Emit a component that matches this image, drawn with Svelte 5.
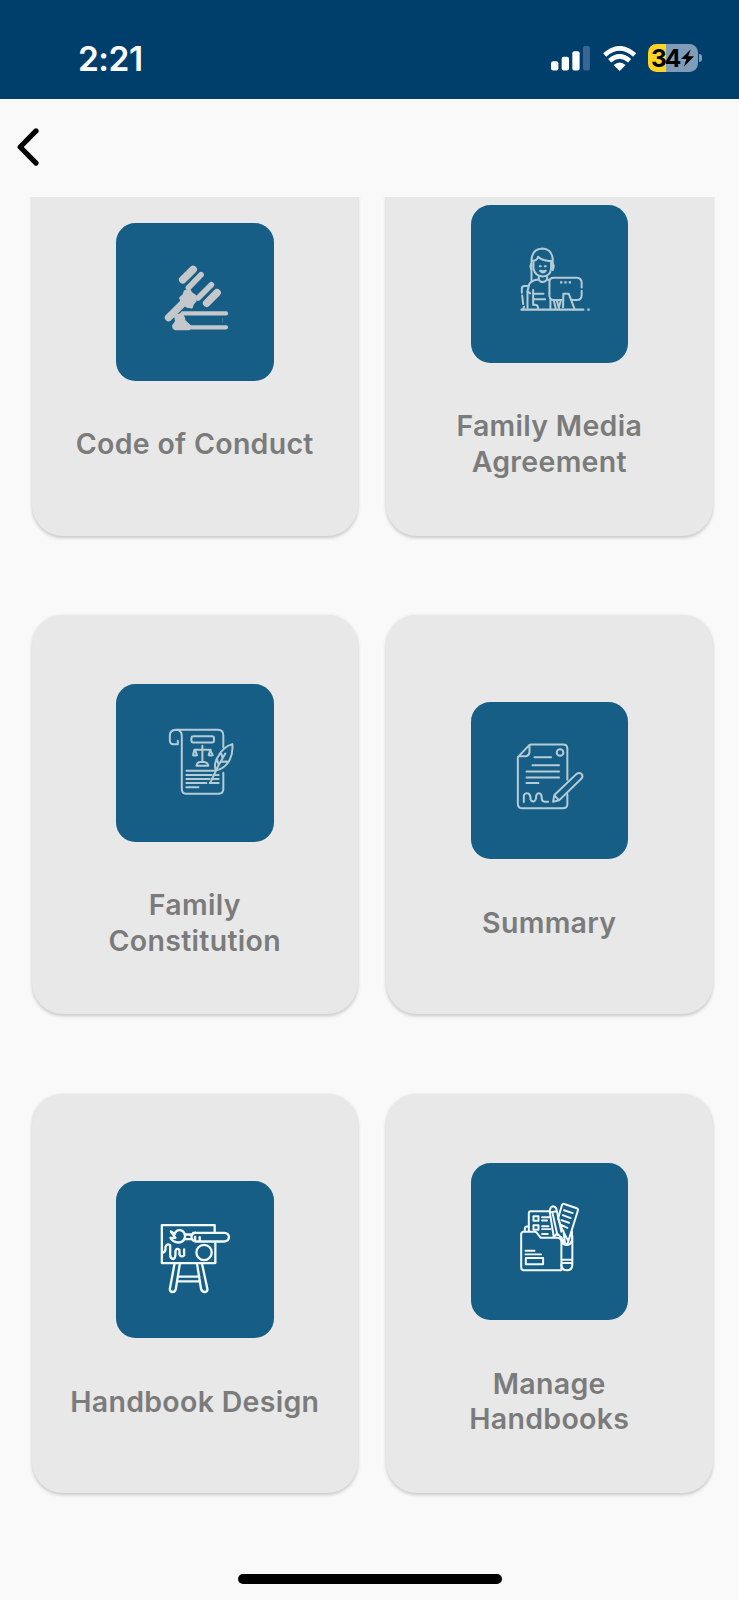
<script lang="ts">
  type IconName = "gavel" | "media" | "scroll" | "summary" | "easel" | "folder";

  interface Card {
    title: string;
    icon: IconName;
    viewBox: string;
  }

  const cards: Card[] = [
    { title: "Code of Conduct", icon: "gavel", viewBox: "-102 -80 474 474" },
    { title: "Family Media Agreement", icon: "media", viewBox: "-102 -88 474 474" },
    { title: "Family Constitution", icon: "scroll", viewBox: "-117 -90 474 474" },
    { title: "Summary", icon: "summary", viewBox: "-102 -83 474 474" },
    { title: "Handbook Design", icon: "easel", viewBox: "-102 -86 474 474" },
    { title: "Manage Handbooks", icon: "folder", viewBox: "-102 -80 474 474" },
  ];
</script>

<div class="screen">
  <header class="status">
    <span class="time">2:21</span>
    <div class="indicators">
      <svg class="signal" viewBox="0 0 117 74">
        <rect x="0" y="46" width="22" height="28" rx="6" fill="#fff" />
        <rect x="32" y="32" width="22" height="42" rx="6" fill="#fff" />
        <rect x="64" y="16" width="22" height="58" rx="6" fill="#fff" />
        <rect x="96" y="0" width="21" height="74" rx="6" fill="#3a6492" />
      </svg>
      <svg class="wifi" viewBox="0 0 100 75" fill="none" stroke="#fff" stroke-width="14">
        <path d="M5 27 Q50 -13 95 27" />
        <path d="M20 44 Q50 18 80 44" />
        <path d="M32 57 Q50 42 68 57 L50 75 Z" fill="#fff" stroke="none" />
      </svg>
      <div class="battery">
        <div class="cell">
          <span>34</span>
          <svg class="bolt" viewBox="0 0 36 48"><path d="M27 0 L0 27 H15 L8 48 L36 19 H20 Z" /></svg>
        </div>
        <i class="nub"></i>
      </div>
    </div>
  </header>

  <nav class="toolbar">
    <button type="button" class="back" aria-label="Back">
      <svg viewBox="0 0 22 38"><path d="M19 2.9 L3.2 19 L19 35.1" /></svg>
    </button>
  </nav>

  <main class="scroll">
    <div class="grid">
      {#each cards as card (card.title)}
        <button type="button" class="card">
          <span class="tile {card.icon}">
            <svg viewBox={card.viewBox}>
              {#if card.icon === "gavel"}
                <path stroke-width="23" d="M99 91 L130 60 M171 161 L202 130" />
                <path stroke-width="17" d="M116 115 L154 76 M145 146 L185 106" />
                <path stroke-width="22" d="M56 205 L112 149" />
                <path class="solid" d="M91 146 L101 137 L105 125 L119 121 L126 132 L138 140 L137 155 L130 163 L126 174 L112 172 L99 164 Z" />
                <path stroke-width="13" d="M98 192 H229 M82 234 H229" />
                <path class="solid" d="M76 202 Q86 192 96 195 Q102 200 104 214 L121 230 L118 240 H77 Q69 238 70 229 L79 216 Z" />
                <path stroke-width="2" opacity="0.4" d="M219 207 V218" />
              {:else if card.icon === "media"}
                <path d="M80 140 V78 Q82 44 113 43 Q141 45 144 74 V108" />
                <path d="M84 80 Q97 80 100 68 Q115 82 139 80 V104 Q136 126 114 127 Q91 126 86 104 V82" />
                <path d="M80 88 Q74 96 80 105 M144 88 Q150 96 144 105" />
                <path d="M106 110 Q115 120 123 110 Q115 113 106 110" />
                <path d="M105 96 h3 M120 96 h3" />
                <path d="M102 126 V137 Q113 151 127 137 V127 M102 136 Q78 138 73 151 L68 172 L76 178 M127 136 L134 138" />
                <path d="M68 156 H58 Q51 157 51 163 V176 M52 184 L55 210 M58 218 L55 224 M68 172 V223 M85 168 V210 M88 179 H116 M88 196 H121 M85 213 Q99 209 100 223" />
                <path d="M134 178 V144 Q134 131 147 131 H216 Q231 132 231 146 V160 M231 170 V184 Q230 198 217 198 H202" />
                <path d="M134 178 Q132 196 145 198 H171 M137 198 V223 M147 199 L153 223 M156 199 L163 223 M168 199 L164 216" />
                <path d="M175 220 L176 179 H192 L209 223" />
                <path class="dots" d="M166 145 h7 M179 145 h7 M192 145 h7 M248 227 h7" />
                <path d="M50 227 H236" stroke-width="7" />
              {:else if card.icon === "scroll"}
                <path d="M65 48 H190 Q206 48 206 65 V101 M206 177 V226 Q206 240 192 240 H94 Q81 240 81 226 V66 Q80 48 63 48 Q45 49 45 66 V79 Q45 91 56 91 H69 V81" />
                <rect x="110" y="67" width="68" height="19" rx="6" />
                <path d="M143 96 V143 M119 108 H168 M119 108 L115 124 Q120 127 127 124 L121 109 M167 108 L162 124 Q168 127 174 124 L167 109" />
                <path d="M125 156 Q127 145 137 145 H149 Q159 146 161 156 Z" />
                <path d="M95 171 H179 M95 184 H171 M95 196 H165 M95 208 H155 M95 221 H131 M177 184 H192 M172 196 H192 M165 208 H192" />
                <path d="M167 207 L184 171 M183 170 Q176 145 193 124 Q207 99 233 91 Q236 116 225 139 Q211 165 183 170 L212 119 M192 153 L187 137 M197 144 L217 143 M203 130 L200 120" />
              {:else if card.icon === "summary"}
                <path d="M78 45 H175 Q188 45 188 58 V151 M188 194 V224 Q188 237 174 237 H53 Q39 237 39 223 V83 L74 46 V68 Q73 79 63 80 H42" />
                <circle cx="166" cy="69" r="10" />
                <path d="M89 83 H139 M83 107 H163 M65 126 H163 M65 144 H163 M65 161 H101" />
                <path d="M57 218 V198 Q60 190 70 192 Q77 196 77 205 V210 Q80 218 88 216 Q94 213 94 204 V200 Q96 190 105 192 Q111 195 111 207 Q111 217 120 217 H130" />
                <path d="M145 217 L149 197 L215 134 Q224 127 231 134 Q237 142 229 149 L163 213 Z M149 198 L162 212" />
              {:else if card.icon === "easel"}
                <path d="M195 67 V47 H36 V161 H197 V101" />
                <path d="M105 75 H124 M105 89 H124 M130 70 H224 Q237 71 238 82 Q238 95 224 96 H139 Q126 95 125 82 Q125 72 136 69 M136 82 V92 M150 83 V93" />
                <path d="M63 66 L75 73 Q79 60 92 62 Q106 66 106 81 Q103 99 86 99 Q70 98 62 85 L77 85 Z" />
                <path d="M38 130 Q46 129 47 119 V112 Q51 101 61 107 V135 Q61 147 70 149 Q77 147 77 134 V124 Q81 114 89 121 V135 Q94 145 103 138 V120" />
                <circle cx="163" cy="129" r="23" />
                <path d="M74 164 L60 239 Q60 248 68 248 Q76 248 78 239 L90 164 M142 164 L154 239 Q158 249 166 248 Q174 247 173 238 L157 164 M86 202 H149 M84 216 H151" />
              {:else}
                <path d="M60 127 V117 Q61 110 71 110 M72 127 V71 Q72 65 78 65 H134 M55 127 H90 Q96 127 99 134 L108 145 H158 Q170 146 170 157 V243 H57 Q49 243 49 234 V135 Q49 128 55 127" />
                <rect x="86" y="80" width="15" height="14" /><rect x="86" y="107" width="15" height="14" />
                <path d="M112 83 H133 M112 93 H127 M112 110 H131 M112 119 H137 M112 134 H129 M135 70 Q134 52 145 50 Q154 51 156 62 L170 127 M135 68 L147 142 M136 69 L155 65 M144 73 L158 137 M148 142 L157 132 L168 143" />
                <path d="M172 119 L160 87 L172 46 Q174 41 181 44 L216 56 Q222 58 219 65 L190 158 Q186 170 177 160 L170 143 M172 119 L191 156 M178 62 L204 71 M174 77 L198 86 M170 92 L193 100 M169 106 L188 115 M176 123 L181 164" />
                <path d="M202 126 V151 Q200 166 184 167 Q172 166 170 153 M203 139 V226 Q202 243 187 243 Q171 243 170 226 M172 211 H201 M172 221 H201" />
                <path d="M62 184 H89 M62 195 H109" /><rect x="63" y="206" width="52" height="19" />
              {/if}
            </svg>
          </span>
          <span class="label">{card.title}</span>
        </button>
      {/each}
    </div>
  </main>

  <footer class="home"><i></i></footer>
</div>

<style>
  :global(body) {
    background: #f9f9f9;
  }

  .screen {
    display: flex;
    flex-direction: column;
    width: 739px;
    height: 1600px;
    overflow: hidden;
    background: #f9f9f9;
    font-family: Inter, "Liberation Sans", sans-serif;
  }

  button {
    border: none;
    padding: 0;
    font: inherit;
    cursor: pointer;
  }

  svg {
    display: block;
  }

  .status {
    box-sizing: border-box;
    flex: none;
    display: flex;
    align-items: center;
    justify-content: space-between;
    height: 98.5px;
    padding: 18px 37px 0 78px;
    background: #003e6c;
  }

  .time {
    padding-top: 1px;
    color: #fff;
    font-size: 33.5px;
    font-weight: 600;
    line-height: 40px;
    letter-spacing: -0.5px;
  }

  .indicators {
    display: flex;
    align-items: center;
  }

  .signal {
    width: 39px;
    height: 24.6px;
    margin-right: 12.5px;
  }

  .wifi {
    width: 33.3px;
    height: 25px;
    margin-right: 12px;
  }

  .battery {
    display: flex;
    align-items: center;
    gap: 1.5px;
  }

  .cell {
    display: flex;
    align-items: center;
    justify-content: center;
    width: 49.5px;
    height: 28px;
    border-radius: 8.5px;
    background: linear-gradient(90deg, #fdd324 35%, #7f9db9 35%);
    color: #000;
    font-size: 24.5px;
    font-weight: 700;
    letter-spacing: -2px;
  }

  .bolt {
    width: 13px;
    height: 18px;
    margin-left: 2px;
  }

  .nub {
    width: 3px;
    height: 8px;
    border-radius: 0 4px 4px 0;
    background: #7f9db9;
  }

  .toolbar {
    box-sizing: border-box;
    flex: none;
    display: flex;
    align-items: center;
    height: 98.5px;
    padding: 0 0 2px 17px;
  }

  .back {
    background: transparent;
  }

  .back svg {
    width: 22px;
    height: 38px;
    fill: none;
    stroke: #000;
    stroke-width: 5.2;
    stroke-linecap: round;
    stroke-linejoin: round;
  }

  .scroll {
    flex: 1;
    min-height: 0;
    overflow: hidden;
  }

  /* the list is scrolled part of the way down */
  .grid {
    display: grid;
    grid-template-columns: 326.5px 326.5px;
    grid-auto-rows: 399.5px;
    gap: 79.3px 28px;
    margin-top: -61px;
    padding-left: 31.5px;
  }

  .card {
    box-sizing: border-box;
    display: flex;
    flex-direction: column;
    align-items: center;
    justify-content: center;
    gap: 45.5px;
    padding-top: 13px;
    border-radius: 31px;
    background: #e8e8e8;
    box-shadow: 0 1.5px 3.5px rgba(0, 0, 0, 0.2);
  }

  .tile {
    flex: none;
    width: 157.5px;
    height: 157.5px;
    border-radius: 19.5px;
    background: #175e86;
    color: #b5ccd6;
  }

  .tile svg {
    width: 100%;
    height: 100%;
    fill: none;
    stroke: currentColor;
    stroke-width: 6;
    stroke-linecap: round;
    stroke-linejoin: round;
  }

  .gavel {
    color: #c5c8ca;
  }

  .easel,
  .folder {
    color: #f2fafd;
  }

  .easel svg {
    stroke-width: 7;
  }

  .tile .solid {
    fill: currentColor;
  }

  .tile .dots {
    stroke-width: 7;
    stroke-linecap: butt;
  }

  .label {
    max-width: 264px;
    color: #7b7b7b;
    font-size: 28.5px;
    font-weight: 600;
    line-height: 35.5px;
    letter-spacing: 0.3px;
    text-align: center;
  }

  .home {
    flex: none;
    display: flex;
    justify-content: center;
    padding-bottom: 16px;
  }

  .home i {
    width: 264px;
    height: 10px;
    border-radius: 5px;
    background: #000;
  }
</style>
